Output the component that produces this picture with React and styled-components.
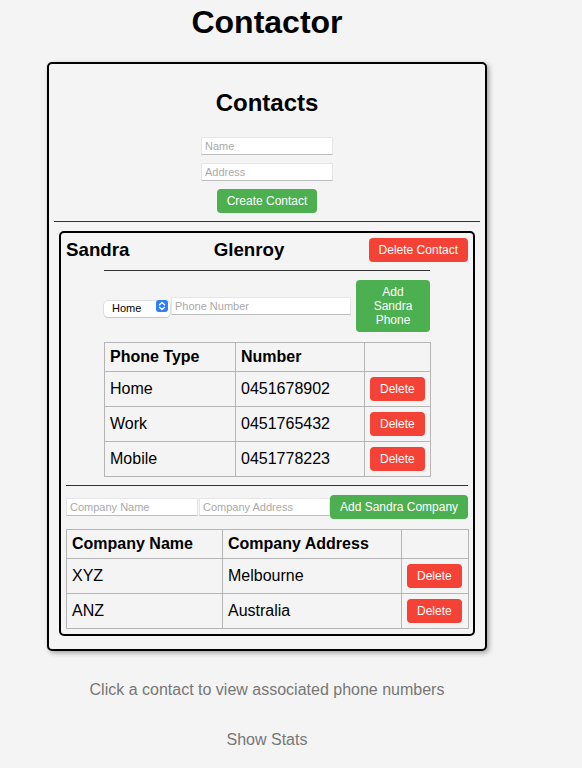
import React from "react"
import styled, { createGlobalStyle } from "styled-components"

const GlobalStyle = createGlobalStyle`
  body {
    margin: 0;
    background: #f4f4f4;
    font-family: "Liberation Sans", Arial, sans-serif;
    color: #000;
  }
`

const phones = [
  { type: "Home", number: "0451678902" },
  { type: "Work", number: "0451765432" },
  { type: "Mobile", number: "0451778223" },
]

const companies = [
  { name: "XYZ", address: "Melbourne" },
  { name: "ANZ", address: "Australia" },
]

export default function App() {
  return (
    <Page>
      <GlobalStyle />
      <Title>Contactor</Title>
      <Card>
        <Heading>Contacts</Heading>
        <CreateForm>
          <TextInput placeholder="Name" width={132} />
          <TextInput placeholder="Address" width={132} />
          <Button color="green">Create Contact</Button>
        </CreateForm>
        <Rule />
        <ContactCard>
          <ContactHeader>
            <ContactName>Sandra</ContactName>
            <ContactName>Glenroy</ContactName>
            <Button color="red">Delete Contact</Button>
          </ContactHeader>
          <PhoneSection>
            <Rule />
            <FormRow gap={1}>
              <SelectWrap>
                <Select defaultValue="Home">
                  <option>Home</option>
                  <option>Work</option>
                  <option>Mobile</option>
                </Select>
                <SelectBadge>
                  <svg width="8" height="10" viewBox="0 0 8 10">
                    <path d="M1.5 3.8 L4 1.5 L6.5 3.8 M1.5 6.2 L4 8.5 L6.5 6.2" fill="none" stroke="#fff" strokeWidth="1.4" strokeLinecap="round" strokeLinejoin="round" />
                  </svg>
                </SelectBadge>
              </SelectWrap>
              <TextInput placeholder="Phone Number" width={180} />
              <Button color="green" width={74} wrap style={{ marginLeft: 4 }}>
                Add Sandra Phone
              </Button>
            </FormRow>
            <DataTable>
              <colgroup>
                <col width="131" />
                <col width="129" />
                <col width="66" />
              </colgroup>
              <thead>
                <tr>
                  <Th>Phone Type</Th>
                  <Th>Number</Th>
                  <Th />
                </tr>
              </thead>
              <tbody>
                {phones.map((p) => (
                  <tr key={p.number}>
                    <Td>{p.type}</Td>
                    <Td>{p.number}</Td>
                    <Td>
                      <Button color="red">Delete</Button>
                    </Td>
                  </tr>
                ))}
              </tbody>
            </DataTable>
          </PhoneSection>
          <Rule />
          <FormRow gap={0}>
            <TextInput placeholder="Company Name" width={132} style={{ marginRight: 1 }} />
            <TextInput placeholder="Company Address" width={131} />
            <Button color="green" width={138}>Add Sandra Company</Button>
          </FormRow>
          <DataTable>
            <colgroup>
              <col width="156" />
              <col width="179" />
              <col width="67" />
            </colgroup>
            <thead>
              <tr>
                <Th>Company Name</Th>
                <Th>Company Address</Th>
                <Th />
              </tr>
            </thead>
            <tbody>
              {companies.map((c) => (
                <tr key={c.name}>
                  <Td>{c.name}</Td>
                  <Td>{c.address}</Td>
                  <Td>
                    <Button color="red">Delete</Button>
                  </Td>
                </tr>
              ))}
            </tbody>
          </DataTable>
        </ContactCard>
      </Card>
      <Hint>Click a contact to view associated phone numbers</Hint>
      <StatsButton>Show Stats</StatsButton>
    </Page>
  )
}

const Page = styled.div`
  width: 534px;
  display: flex;
  flex-direction: column;
  align-items: center;
`

const Title = styled.h1`
  font-size: 32px;
  font-weight: bold;
  margin: 4px 0 0;
`

const Card = styled.div`
  box-sizing: border-box;
  width: 440px;
  margin-top: 21px;
  padding: 5px;
  border: 2px solid #000;
  border-radius: 5px;
  background: #f4f4f4;
  box-shadow: 2px 2px 5px rgba(0, 0, 0, 0.35);
`

const Heading = styled.h2`
  font-size: 24px;
  font-weight: bold;
  text-align: center;
  margin: 20px 0 20px;
`

const CreateForm = styled.div`
  display: flex;
  flex-direction: column;
  align-items: center;
  gap: 8px;
`

const TextInput = styled.input`
  box-sizing: border-box;
  flex-shrink: 0;
  width: ${(p) => p.width}px;
  height: 18px;
  padding: 0 3px;
  border: 1px solid #e6e6e6;
  border-bottom-color: #bdbdbd;
  background: #fff;
  font-family: "Liberation Sans", Arial, sans-serif;
  font-size: 11px;
  outline: none;

  &::placeholder {
    color: #a9a9a9;
  }
`

const Button = styled.button.withConfig({
  shouldForwardProp: (prop) => !["color", "width", "wrap"].includes(prop),
})`
  box-sizing: border-box;
  flex-shrink: 0;
  ${(p) => (p.width ? `width: ${p.width}px;` : "")}
  padding: 5px 10px;
  border: none;
  border-radius: 4px;
  background: ${(p) => (p.color === "red" ? "#f44336" : "#4caf50")};
  color: #fff;
  font-family: "Liberation Sans", Arial, sans-serif;
  font-size: 12px;
  line-height: 14px;
  white-space: ${(p) => (p.wrap ? "normal" : "nowrap")};
  cursor: pointer;
`

const Rule = styled.hr`
  height: 0;
  margin: 8px 0;
  border: none;
  border-top: 1px solid #333;
`

const ContactCard = styled.div`
  margin: 9px 5px 8px;
  padding: 5px;
  border: 2px solid #000;
  border-radius: 5px;
`

const ContactHeader = styled.div`
  display: flex;
  justify-content: space-between;
  align-items: center;
`

const ContactName = styled.h3`
  font-size: 18.72px;
  font-weight: bold;
  margin: 0;
`

const PhoneSection = styled.div`
  width: 326px;
  margin: 0 auto;
`

const FormRow = styled.div`
  display: flex;
  align-items: center;
  gap: ${(p) => p.gap}px;
  margin-top: 9px;
`

const SelectWrap = styled.div`
  position: relative;
  flex-shrink: 0;
  width: 66px;
  height: 16px;
`

const Select = styled.select`
  appearance: none;
  box-sizing: border-box;
  width: 100%;
  height: 16px;
  padding: 0 0 1px 8px;
  border: none;
  border-radius: 4px;
  background: #fff;
  box-shadow: 0 0 0 0.5px rgba(0, 0, 0, 0.15), 0 1px 1px rgba(0, 0, 0, 0.12);
  font-family: "Liberation Sans", Arial, sans-serif;
  font-size: 11px;
  line-height: 14px;
  color: #000;
  outline: none;
`

const SelectBadge = styled.span`
  position: absolute;
  right: 2px;
  top: 2px;
  width: 12px;
  height: 12px;
  border-radius: 3px;
  background: #2d7ff9;
  display: flex;
  align-items: center;
  justify-content: center;
  pointer-events: none;
`

const DataTable = styled.table`
  width: 100%;
  margin-top: 10px;
  border-collapse: collapse;
  table-layout: fixed;
  font-size: 16px;
`

const Th = styled.th`
  padding: 5px 5px;
  border: 1px solid #b5b5b5;
  text-align: left;
  font-weight: bold;
  line-height: 18px;
`

const Td = styled.td`
  padding: 5px 5px;
  border: 1px solid #b5b5b5;
  text-align: left;
  line-height: 18px;
`

const Hint = styled.p`
  margin: 30px 0 0;
  font-size: 16px;
  color: #777;
`

const StatsButton = styled.button`
  margin-top: 32px;
  padding: 0;
  border: none;
  background: none;
  font-family: "Liberation Sans", Arial, sans-serif;
  font-size: 16px;
  color: #777;
  cursor: pointer;
`
